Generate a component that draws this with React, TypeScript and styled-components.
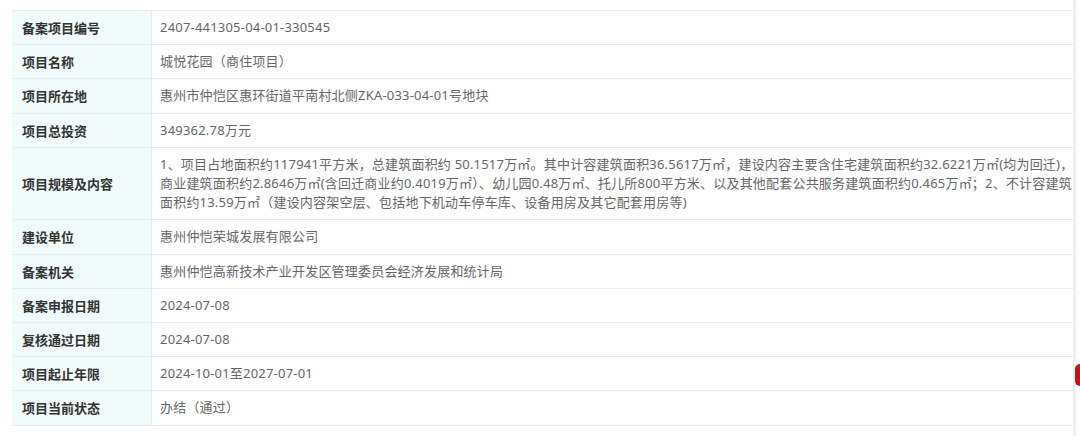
import React from "react";
import styled, { createGlobalStyle } from "styled-components";

const Global = createGlobalStyle`
  html, body { margin: 0; padding: 0; background: #ffffff; }
  body { font-family: "Noto Sans CJK SC", "Noto Sans", sans-serif; overflow: hidden; }
`;

const Page = styled.div`
  width: 1080px;
  height: 436px;
  box-sizing: border-box;
  padding: 10px 0 0 12px;
  position: relative;
  overflow: hidden;
`;

const Table = styled.div`
  width: 1062px;
  border-top: 1px solid #e6ecee;
  display: flex;
  flex-direction: column;
`;

const Row = styled.div`
  display: grid;
  grid-template-columns: 140px 1fr;
  border-bottom: 1px solid #e6ecee;
`;

const Label = styled.div`
  background: #f2fbfb;
  border-right: 1px solid #e6ecee;
  color: #333333;
  font-weight: 700;
  font-size: 13px;
  line-height: 19.2px;
  padding: 7px 0 7px 10px;
  display: flex;
  align-items: center;
`;

const Value = styled.div`
  color: #666666;
  font-family: "Noto Sans", "Noto Sans CJK SC", sans-serif;
  font-size: 13px;
  letter-spacing: 0.2px;
  line-height: 19.2px;
  padding: 7px 0 7px 8px;
  white-space: nowrap;
`;

const Line = styled.div``;

const EdgeShade = styled.div`
  position: absolute;
  top: 0;
  right: 0;
  width: 7px;
  height: 100%;
  background: linear-gradient(to right, #ececec 0, #f4f4f4 3px, #ffffff 4px);
`;

const RedTab = styled.div`
  position: absolute;
  right: 0;
  top: 364px;
  width: 5px;
  height: 22px;
  background: #e8000b;
  border-radius: 6px 0 0 6px;
`;

const rows: [string, string[]][] = [
  ["备案项目编号", ["2407-441305-04-01-330545"]],
  ["项目名称", ["城悦花园（商住项目）"]],
  ["项目所在地", ["惠州市仲恺区惠环街道平南村北侧ZKA-033-04-01号地块"]],
  ["项目总投资", ["349362.78万元"]],
  [
    "项目规模及内容",
    [
      "1、项目占地面积约117941平方米，总建筑面积约 50.1517万㎡。其中计容建筑面积36.5617万㎡，建设内容主要含住宅建筑面积约32.6221万㎡(均为回迁)，",
      "商业建筑面积约2.8646万㎡(含回迁商业约0.4019万㎡）、幼儿园0.48万㎡、托儿所800平方米、以及其他配套公共服务建筑面积约0.465万㎡；2、不计容建筑",
      "面积约13.59万㎡（建设内容架空层、包括地下机动车停车库、设备用房及其它配套用房等)",
    ],
  ],
  ["建设单位", ["惠州仲恺荣城发展有限公司"]],
  ["备案机关", ["惠州仲恺高新技术产业开发区管理委员会经济发展和统计局"]],
  ["备案申报日期", ["2024-07-08"]],
  ["复核通过日期", ["2024-07-08"]],
  ["项目起止年限", ["2024-10-01至2027-07-01"]],
  ["项目当前状态", ["办结（通过）"]],
];

export default function App() {
  return (
    <Page>
      <Global />
      <Table>
        {rows.map(([label, lines]) => (
          <Row key={label}>
            <Label>{label}</Label>
            <Value>
              {lines.map((l, i) => (
                <Line key={i}>{l}</Line>
              ))}
            </Value>
          </Row>
        ))}
      </Table>
      <EdgeShade />
      <RedTab />
    </Page>
  );
}
